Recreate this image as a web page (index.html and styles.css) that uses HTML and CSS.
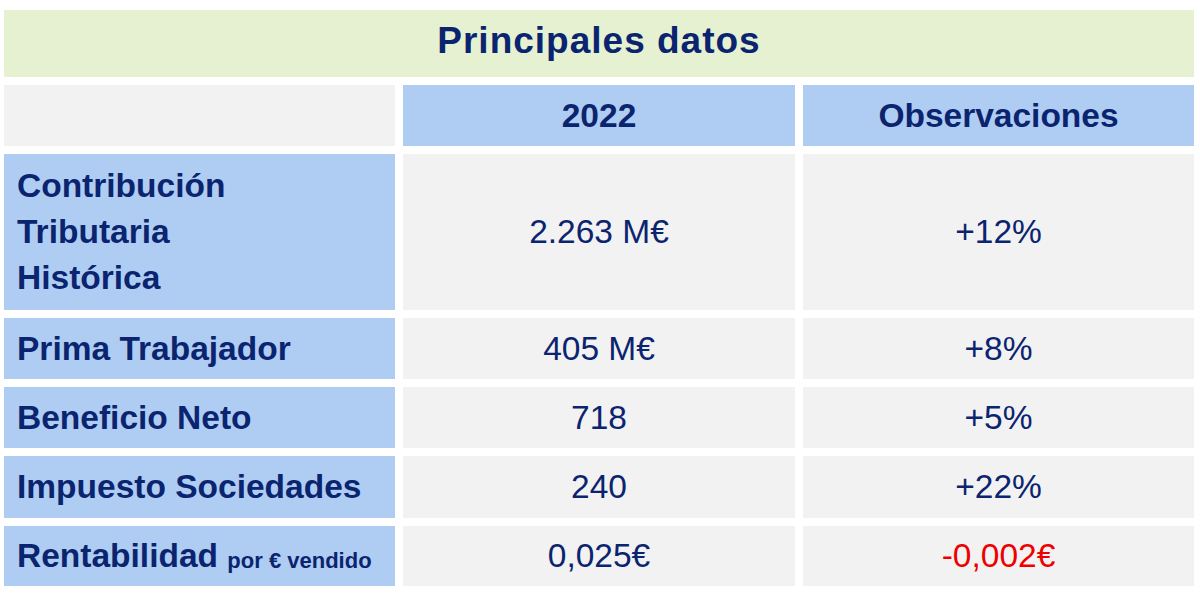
FILE: index.html
```html
<!DOCTYPE html>
<html lang="es">
<head>
<meta charset="utf-8">
<title>Principales datos</title>
<link rel="stylesheet" href="styles.css">
</head>
<body>
<div class="sheet">
  <div class="cell title">Principales datos</div>
  <div class="cell blank"></div>
  <div class="cell head">2022</div>
  <div class="cell head">Observaciones</div>

  <div class="cell label multi">Contribución<br>Tributaria<br>Histórica</div>
  <div class="cell value">2.263 M€</div>
  <div class="cell value">+12%</div>

  <div class="cell label">Prima Trabajador</div>
  <div class="cell value">405 M€</div>
  <div class="cell value">+8%</div>

  <div class="cell label">Beneficio Neto</div>
  <div class="cell value">718</div>
  <div class="cell value">+5%</div>

  <div class="cell label">Impuesto Sociedades</div>
  <div class="cell value">240</div>
  <div class="cell value">+22%</div>

  <div class="cell label">Rentabilidad&nbsp;<span class="small">por € vendido</span></div>
  <div class="cell value">0,025€</div>
  <div class="cell value neg">-0,002€</div>
</div>
</body>
</html>
```

FILE: styles.css
```css
html, body {
  margin: 0;
  padding: 0;
  background: #ffffff;
}

body {
  font-family: "Liberation Sans", Arial, sans-serif;
  color: #0b2470;
}

.sheet {
  display: grid;
  grid-template-columns: 391px 392px 391px;
  grid-template-rows: 67px 61px 156px 61px 61px 62px 60px;
  column-gap: 8px;
  row-gap: 8px;
  padding: 10px 0 0 4px;
}

.cell {
  display: flex;
  align-items: center;
  font-size: 33.5px;
  line-height: 1;
}

.title {
  grid-column: 1 / 4;
  background: #e6f1d2;
  justify-content: center;
  font-weight: bold;
  font-size: 37px;
  letter-spacing: 1px;
  padding-bottom: 6px;
  box-sizing: border-box;
}

.blank {
  background: #f2f2f2;
}

.head {
  background: #afcdf2;
  justify-content: center;
  font-weight: bold;
}

.label {
  background: #afcdf2;
  font-weight: bold;
  padding-left: 13px;
  white-space: nowrap;
}

.label.multi {
  line-height: 46px;
}

.small {
  font-size: 22px;
  align-self: center;
  padding-top: 9px;
}

.value {
  background: #f2f2f2;
  justify-content: center;
}

.neg {
  color: #ee0000;
}
```
